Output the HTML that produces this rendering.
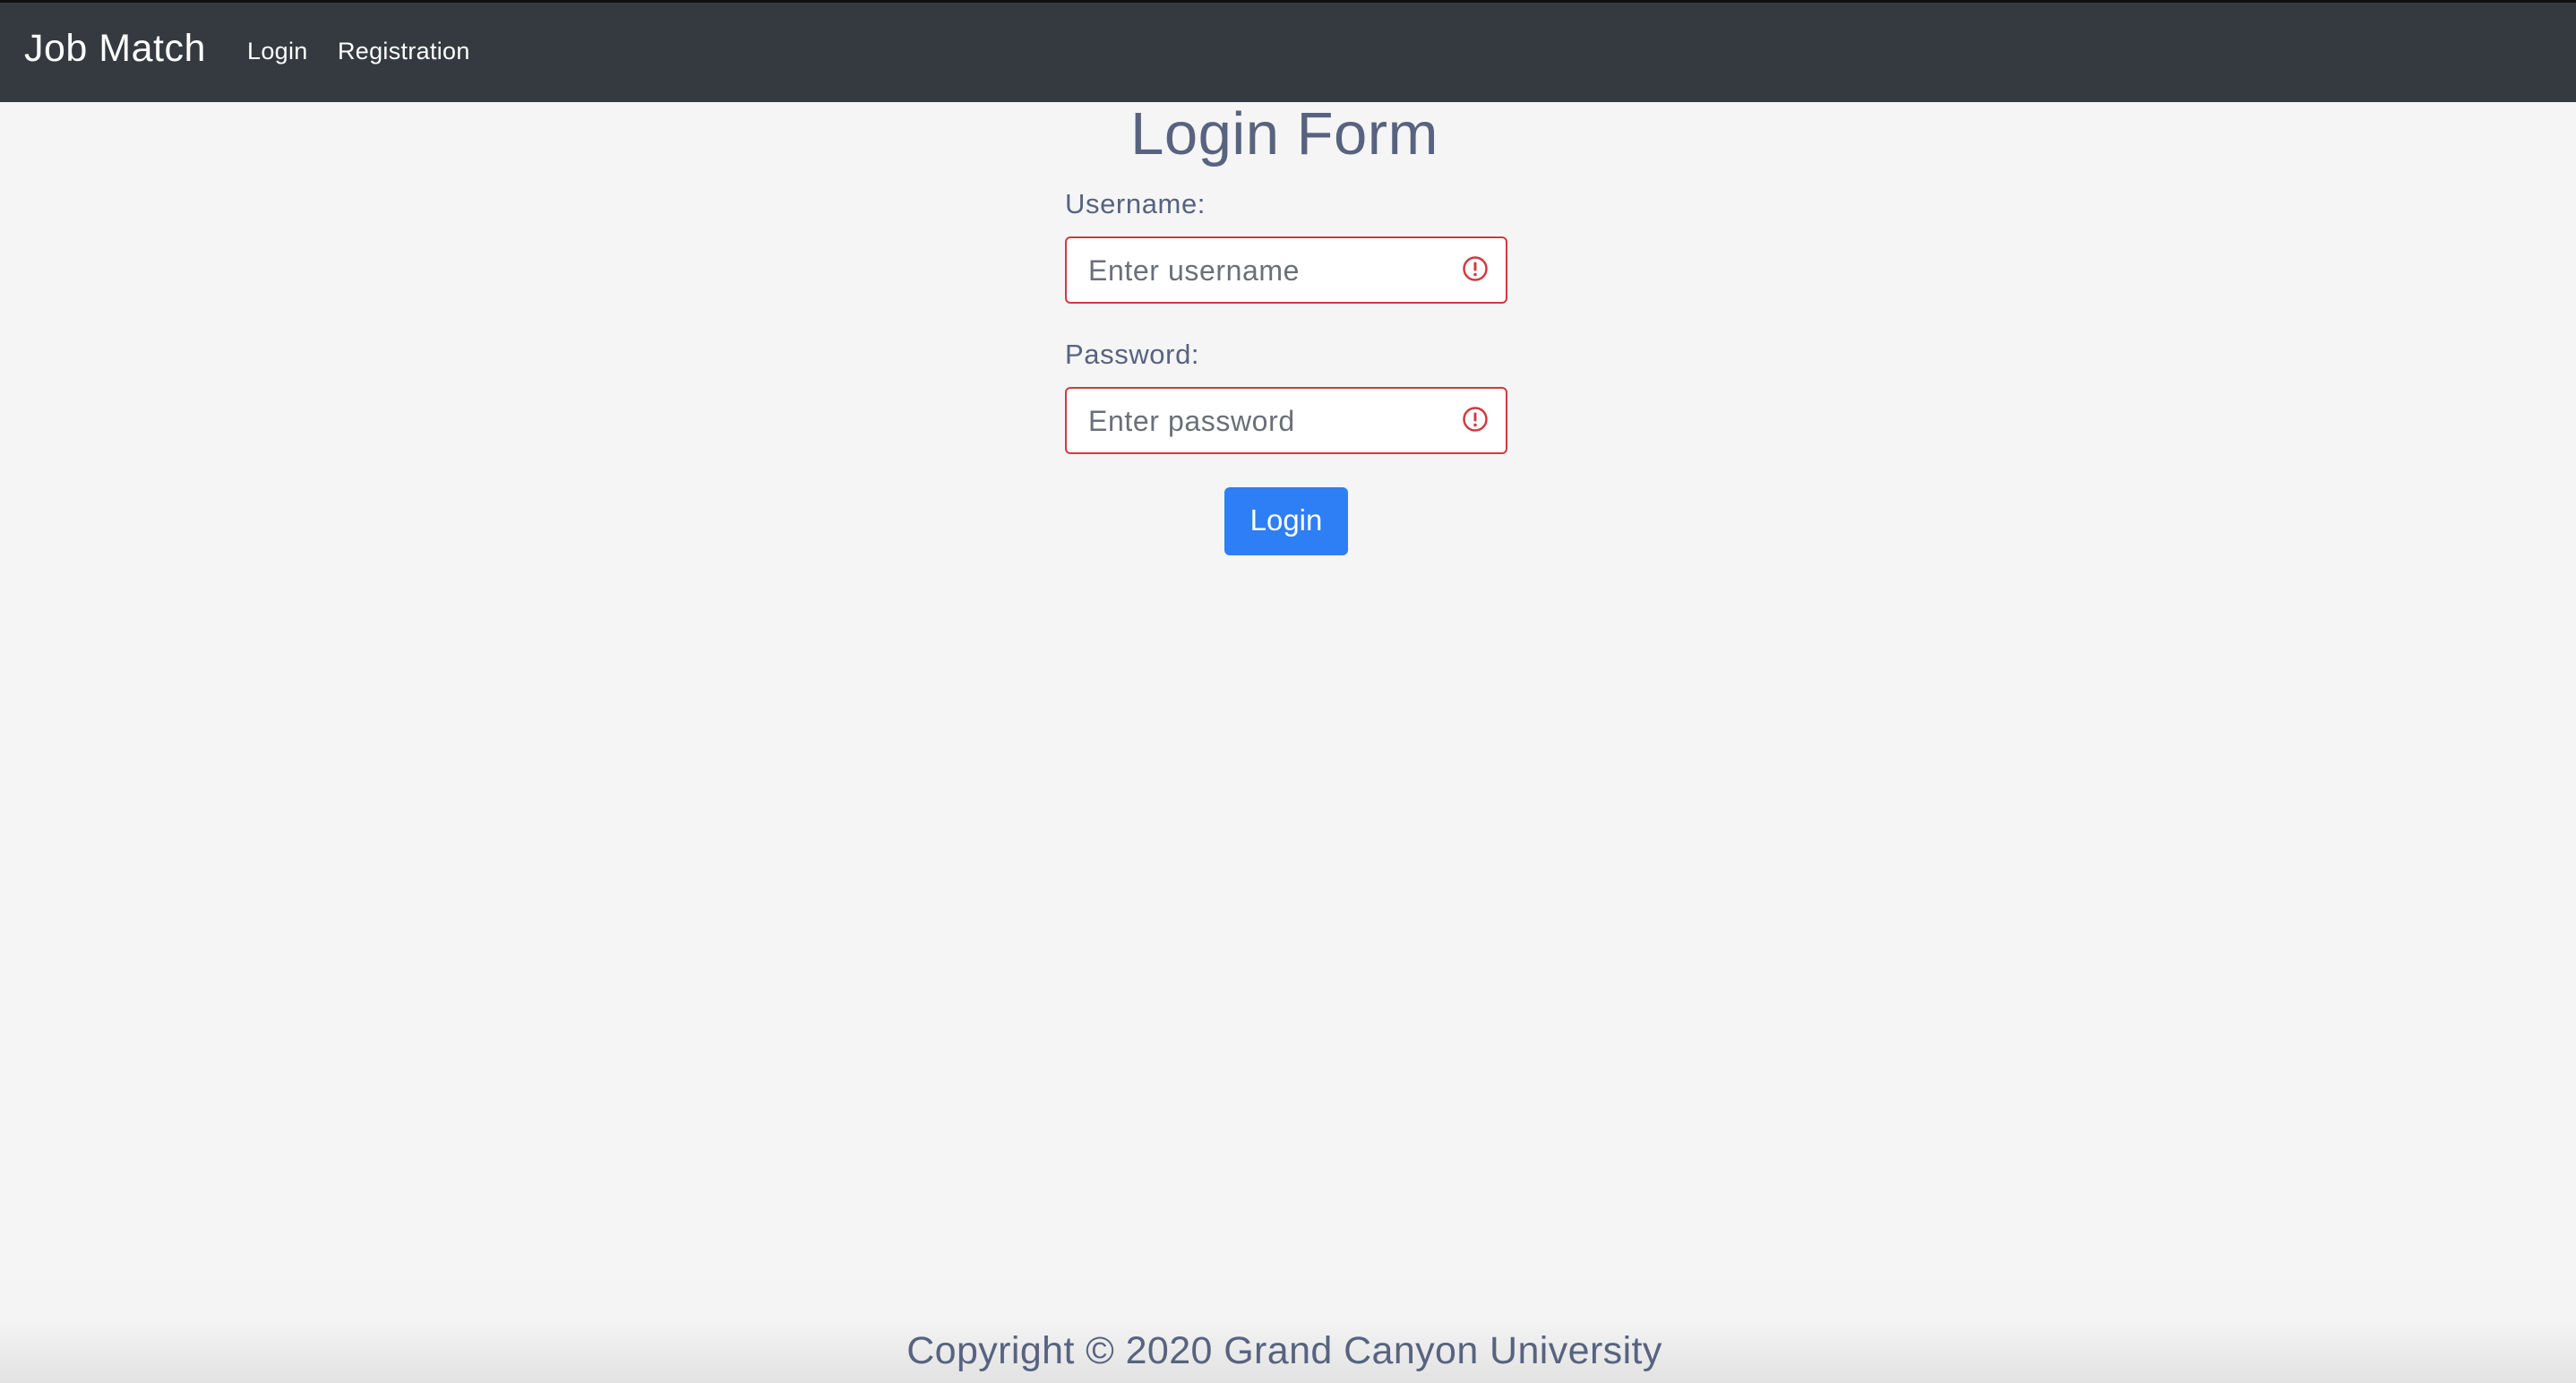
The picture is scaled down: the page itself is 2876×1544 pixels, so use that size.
<!DOCTYPE html>
<html><head><meta charset="utf-8"><style>
html,body{margin:0;padding:0;}
body{width:2876px;height:1544px;background:#f5f5f5;font-family:"Liberation Sans",sans-serif;position:relative;overflow:hidden;}
.nav{position:absolute;left:0;top:0;width:2876px;height:114px;background:#343a40;border-top:3px solid #111;box-sizing:border-box;}
.brand{position:absolute;left:27px;top:30px;font-size:43px;color:#fff;line-height:1;letter-spacing:0.5px;}
.link{position:absolute;top:41px;font-size:27px;color:#fff;line-height:1;letter-spacing:0.3px;}
.title{position:absolute;left:0;width:2868px;text-align:center;top:116px;font-size:67px;color:#57637f;line-height:1;letter-spacing:0.5px;}
.label{position:absolute;left:1189px;font-size:31px;color:#57637f;line-height:1;letter-spacing:0.6px;}
.input{position:absolute;left:1189px;width:494px;height:75px;box-sizing:border-box;border:2px solid #d03a44;border-radius:6px;background:#fff;}
.ph{position:absolute;left:24px;top:20px;font-size:32px;color:#6a7078;line-height:1;letter-spacing:0.6px;}
.icon{position:absolute;left:1632px;}
.btn{position:absolute;left:1367px;top:544px;width:138px;height:76px;background:#2e7ef6;border-radius:6px;color:#fff;font-size:33px;text-align:center;line-height:74px;}
.footer{position:absolute;left:0;top:1420px;width:2876px;height:124px;background:linear-gradient(#f5f5f5 0%,#f3f3f3 45%,#e2e2e2 100%);}
.ft{position:absolute;left:0;width:2868px;text-align:center;top:67px;font-size:43px;color:#57637f;line-height:1;letter-spacing:0.4px;}
</style></head><body>
<div class="nav">
<div class="brand">Job Match</div>
<div class="link" style="left:276px">Login</div>
<div class="link" style="left:377px">Registration</div>
</div>
<div class="title">Login Form</div>
<div class="label" style="top:212px">Username:</div>
<div class="input" style="top:264px"><div class="ph">Enter username</div></div>
<svg class="icon" style="top:285px" width="30" height="30" viewBox="0 0 30 30"><circle cx="15" cy="15" r="12.5" fill="none" stroke="#d03a44" stroke-width="2.5"/><rect x="13.5" y="7.5" width="3" height="10" rx="1.2" fill="#d03a44"/><circle cx="15" cy="21.5" r="1.8" fill="#d03a44"/></svg>
<div class="label" style="top:380px">Password:</div>
<div class="input" style="top:432px"><div class="ph">Enter password</div></div>
<svg class="icon" style="top:453px" width="30" height="30" viewBox="0 0 30 30"><circle cx="15" cy="15" r="12.5" fill="none" stroke="#d03a44" stroke-width="2.5"/><rect x="13.5" y="7.5" width="3" height="10" rx="1.2" fill="#d03a44"/><circle cx="15" cy="21.5" r="1.8" fill="#d03a44"/></svg>
<div class="btn">Login</div>
<div class="footer"><div class="ft">Copyright © 2020 Grand Canyon University</div></div>
</body></html>
